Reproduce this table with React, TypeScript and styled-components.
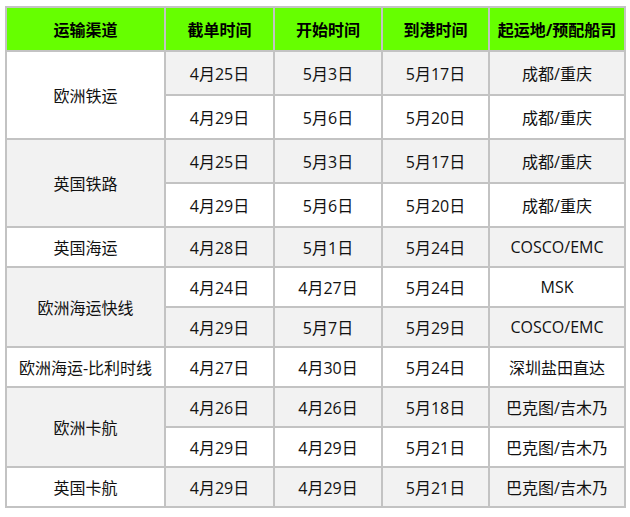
import React from "react";
import styled, { createGlobalStyle } from "styled-components";

const GlobalStyle = createGlobalStyle`
  body {
    margin: 0;
    background: #ffffff;
    font-family: "Open Sans", "Noto Sans CJK SC", sans-serif;
  }
`;

const Page = styled.div`
  padding: 6px 5px;
`;

const Table = styled.table`
  width: 619px;
  table-layout: fixed;
  border-collapse: collapse;
  font-size: 16px;
  color: #111;
`;

const HeadCell = styled.th`
  height: 42px;
  padding: 0;
  background: #66ff00;
  border: 2px solid #c3c3c3;
  font-weight: 700;
  color: #000;
  text-align: center;
  white-space: nowrap;
`;

const Cell = styled.td<{ $shaded: boolean; $tall: boolean }>`
  height: ${(p) => (p.$tall ? 42 : 38)}px;
  padding: 0;
  border: 2px solid #c3c3c3;
  text-align: center;
  white-space: nowrap;
  background: ${(p) => (p.$shaded ? "#f2f2f2" : "#ffffff")};
`;

interface Trip {
  cutoff: string;
  start: string;
  arrive: string;
  carrier: string;
}

interface Channel {
  name: string;
  tall: boolean;
  trips: Trip[];
}

const channels: Channel[] = [
  {
    name: "欧洲铁运",
    tall: true,
    trips: [
      { cutoff: "4月25日", start: "5月3日", arrive: "5月17日", carrier: "成都/重庆" },
      { cutoff: "4月29日", start: "5月6日", arrive: "5月20日", carrier: "成都/重庆" },
    ],
  },
  {
    name: "英国铁路",
    tall: true,
    trips: [
      { cutoff: "4月25日", start: "5月3日", arrive: "5月17日", carrier: "成都/重庆" },
      { cutoff: "4月29日", start: "5月6日", arrive: "5月20日", carrier: "成都/重庆" },
    ],
  },
  {
    name: "英国海运",
    tall: false,
    trips: [{ cutoff: "4月28日", start: "5月1日", arrive: "5月24日", carrier: "COSCO/EMC" }],
  },
  {
    name: "欧洲海运快线",
    tall: false,
    trips: [
      { cutoff: "4月24日", start: "4月27日", arrive: "5月24日", carrier: "MSK" },
      { cutoff: "4月29日", start: "5月7日", arrive: "5月29日", carrier: "COSCO/EMC" },
    ],
  },
  {
    name: "欧洲海运-比利时线",
    tall: false,
    trips: [{ cutoff: "4月27日", start: "4月30日", arrive: "5月24日", carrier: "深圳盐田直达" }],
  },
  {
    name: "欧洲卡航",
    tall: false,
    trips: [
      { cutoff: "4月26日", start: "4月26日", arrive: "5月18日", carrier: "巴克图/吉木乃" },
      { cutoff: "4月29日", start: "4月29日", arrive: "5月21日", carrier: "巴克图/吉木乃" },
    ],
  },
  {
    name: "英国卡航",
    tall: false,
    trips: [{ cutoff: "4月29日", start: "4月29日", arrive: "5月21日", carrier: "巴克图/吉木乃" }],
  },
];

const headers = ["运输渠道", "截单时间", "开始时间", "到港时间", "起运地/预配船司"];
const widths = [159, 109, 108, 107, 136];

const App: React.FC = () => {
  let rowIndex = 0;
  const rows: React.ReactNode[] = [];

  channels.forEach((channel, group) => {
    channel.trips.forEach((trip, i) => {
      const shaded = rowIndex % 2 === 0;
      rows.push(
        <tr key={`${group}-${i}`}>
          {i === 0 && (
            <Cell
              rowSpan={channel.trips.length}
              $shaded={group % 2 === 1}
              $tall={channel.tall}
            >
              {channel.name}
            </Cell>
          )}
          <Cell $shaded={shaded} $tall={channel.tall}>{trip.cutoff}</Cell>
          <Cell $shaded={shaded} $tall={channel.tall}>{trip.start}</Cell>
          <Cell $shaded={shaded} $tall={channel.tall}>{trip.arrive}</Cell>
          <Cell $shaded={shaded} $tall={channel.tall}>{trip.carrier}</Cell>
        </tr>
      );
      rowIndex++;
    });
  });

  return (
    <>
      <GlobalStyle />
      <Page>
        <Table>
          <colgroup>
            {widths.map((w, i) => (
              <col key={i} style={{ width: w }} />
            ))}
          </colgroup>
          <thead>
            <tr>
              {headers.map((h) => (
                <HeadCell key={h}>{h}</HeadCell>
              ))}
            </tr>
          </thead>
          <tbody>{rows}</tbody>
        </Table>
      </Page>
    </>
  );
};

export default App;
